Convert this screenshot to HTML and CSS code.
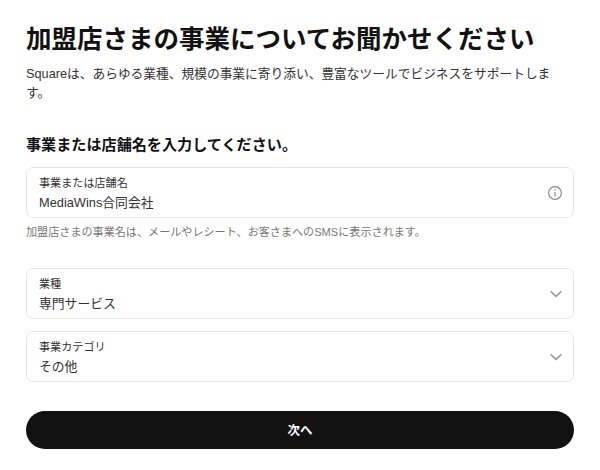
FILE: index.html
```html
<!DOCTYPE html>
<html lang="ja">
<head>
<meta charset="utf-8">
<title>加盟店さまの事業についてお聞かせください</title>
<link rel="stylesheet" href="styles.css">
</head>
<body>
<main class="page">
  <h1 class="title">加盟店さまの事業についてお聞かせください</h1>
  <p class="lead">Squareは、あらゆる業種、規模の事業に寄り添い、豊富なツールでビジネスをサポートします。</p>
  <h2 class="section">事業または店舗名を入力してください。</h2>
  <div class="field">
    <div class="field-text">
      <span class="field-label">事業または店舗名</span>
      <span class="field-value">MediaWins合同会社</span>
    </div>
    <svg class="icon" viewBox="0 0 16 16" width="16" height="16" aria-hidden="true">
      <circle cx="8" cy="8" r="6.4" fill="none" stroke="#8c8c8c" stroke-width="1.2"/>
      <path d="M8 7v4.4" fill="none" stroke="#8c8c8c" stroke-width="1.2"/>
      <circle cx="8" cy="5" r=".8" fill="#8c8c8c"/>
    </svg>
  </div>
  <p class="hint">加盟店さまの事業名は、メールやレシート、お客さまへのSMSに表示されます。</p>
  <div class="selects">
    <div class="field">
      <div class="field-text">
        <span class="field-label">業種</span>
        <span class="field-value">専門サービス</span>
      </div>
      <svg class="icon" viewBox="0 0 16 16" width="16" height="16" aria-hidden="true">
        <path d="M3.6 5.4L9 10.4l5.4-5" fill="none" stroke="#999" stroke-width="1.5"/>
      </svg>
    </div>
    <div class="field">
      <div class="field-text">
        <span class="field-label">事業カテゴリ</span>
        <span class="field-value">その他</span>
      </div>
      <svg class="icon" viewBox="0 0 16 16" width="16" height="16" aria-hidden="true">
        <path d="M3.6 5.4L9 10.4l5.4-5" fill="none" stroke="#999" stroke-width="1.5"/>
      </svg>
    </div>
  </div>
  <button class="next" type="button">次へ</button>
</main>
</body>
</html>
```
FILE: styles.css
```css
* { box-sizing: border-box; }
html, body { margin: 0; padding: 0; background: #fff; }
body {
  font-family: "Liberation Sans", "Noto Sans CJK JP", sans-serif;
  color: #121212;
  width: 600px;
  height: 470px;
  overflow: hidden;
}
.page {
  padding: 22px 26px 0 26px;
  display: flex;
  flex-direction: column;
}
.title {
  margin: 0;
  font-size: 25.5px;
  line-height: 34px;
  font-weight: 700;
  color: #121212;
}
.lead {
  margin: 8px 0 0;
  font-size: 12.72px;
  line-height: 19px;
  color: #333;
}
.section {
  margin: 32px 0 0;
  font-size: 15.12px;
  line-height: 22px;
  font-weight: 700;
  color: #121212;
}
.field {
  height: 51px;
  border: 1px solid #e6e6e6;
  border-radius: 7px;
  padding: 0 10px 0 12px;
  display: flex;
  align-items: center;
  justify-content: space-between;
  background: #fff;
}
.section + .field { margin-top: 11px; }
.field-text {
  display: flex;
  flex-direction: column;
  padding-top: 5px;
}
.field-label {
  font-size: 11.1px;
  line-height: 16px;
  color: #333;
}
.field-value {
  font-size: 12.8px;
  line-height: 24px;
  color: #333;
}
.hint {
  margin: 7px 0 0;
  font-size: 11.1px;
  line-height: 14px;
  color: #777;
}
.selects {
  margin-top: 29px;
  display: flex;
  flex-direction: column;
  gap: 12px;
}
.next {
  margin-top: 29px;
  height: 38px;
  border: 0;
  border-radius: 19px;
  padding: 0 0 2px;
  background: #121212;
  color: #fff;
  font-family: inherit;
  font-size: 12.5px;
  font-weight: 700;
}
```
